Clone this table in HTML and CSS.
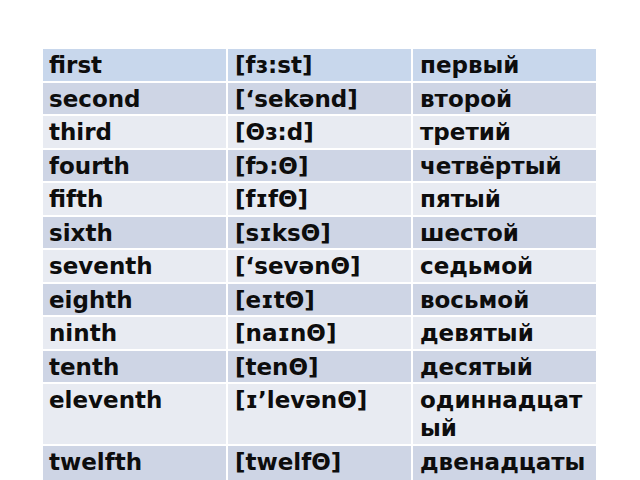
FILE: index.html
```html
<!DOCTYPE html>
<html>
<head>
<meta charset="utf-8">
<link rel="stylesheet" href="styles.css">
</head>
<body>
<div class="table">
  <div class="cell head">first</div><div class="cell head">[fɜ:st]</div><div class="cell head">первый</div>
  <div class="cell dark">second</div><div class="cell dark">[‘sekənd]</div><div class="cell dark">второй</div>
  <div class="cell light">third</div><div class="cell light">[Θɜ:d]</div><div class="cell light">третий</div>
  <div class="cell dark">fourth</div><div class="cell dark">[fɔ:Θ]</div><div class="cell dark">четвёртый</div>
  <div class="cell light">fifth</div><div class="cell light">[fɪfΘ]</div><div class="cell light">пятый</div>
  <div class="cell dark">sixth</div><div class="cell dark">[sɪksΘ]</div><div class="cell dark">шестой</div>
  <div class="cell light">seventh</div><div class="cell light">[‘sevənΘ]</div><div class="cell light">седьмой</div>
  <div class="cell dark">eighth</div><div class="cell dark">[eɪtΘ]</div><div class="cell dark">восьмой</div>
  <div class="cell light">ninth</div><div class="cell light">[naɪnΘ]</div><div class="cell light">девятый</div>
  <div class="cell dark">tenth</div><div class="cell dark">[tenΘ]</div><div class="cell dark">десятый</div>
  <div class="cell light">eleventh</div><div class="cell light">[ɪ’levənΘ]</div><div class="cell light">одиннадцатый</div>
  <div class="cell dark">twelfth</div><div class="cell dark">[twelfΘ]</div><div class="cell dark">двенадцатый</div>
</div>
</body>
</html>
```
FILE: styles.css
```css
html, body {
  margin: 0;
  padding: 0;
  background: #ffffff;
  overflow: hidden;
}
.table {
  display: grid;
  grid-template-columns: 183px 183px 183px;
  gap: 2px;
  margin: 49px 0 0 43px;
  font-family: "DejaVu Sans", sans-serif;
  font-weight: bold;
  font-size: 23px;
  line-height: 28px;
  color: #0d0d0d;
}
.cell {
  padding: 2px 6px 1.5px 7px;
  word-break: break-all;
}
.cell:nth-child(3n+1) {
  padding-left: 6px;
}
.head {
  background: #c8d7ec;
}
.dark {
  background: #ced5e5;
}
.light {
  background: #e8ebf2;
}
```
